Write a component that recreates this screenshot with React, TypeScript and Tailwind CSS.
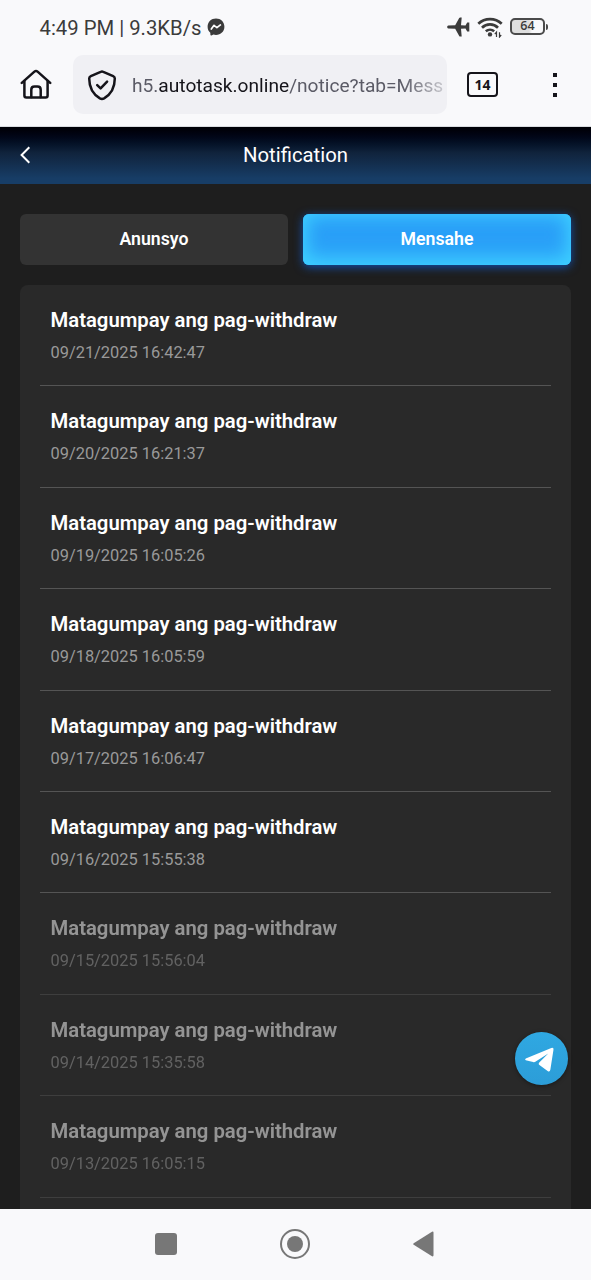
import { clsx } from "clsx"

interface Message {
  title: string
  date: string
  read?: boolean
}

const messages: Message[] = [
  { title: "Matagumpay ang pag-withdraw", date: "09/21/2025 16:42:47" },
  { title: "Matagumpay ang pag-withdraw", date: "09/20/2025 16:21:37" },
  { title: "Matagumpay ang pag-withdraw", date: "09/19/2025 16:05:26" },
  { title: "Matagumpay ang pag-withdraw", date: "09/18/2025 16:05:59" },
  { title: "Matagumpay ang pag-withdraw", date: "09/17/2025 16:06:47" },
  { title: "Matagumpay ang pag-withdraw", date: "09/16/2025 15:55:38" },
  { title: "Matagumpay ang pag-withdraw", date: "09/15/2025 15:56:04", read: true },
  { title: "Matagumpay ang pag-withdraw", date: "09/14/2025 15:35:58", read: true },
  { title: "Matagumpay ang pag-withdraw", date: "09/13/2025 16:05:15", read: true },
]

function StatusBar() {
  return (
    <div className="flex h-[55px] shrink-0 items-center pb-px pl-[39.500px] pr-[43px] text-[#3b3b3b]">
      <span className="mt-px whitespace-pre text-[20.300px] leading-6">4:49 PM | 9.3KB/s</span>
      {/* messenger */}
      <svg className="ml-[5px] h-[18px] w-[18px]" viewBox="0 0 18 18">
        <path
          d="M9 .5C4.200.5.600 4 .600 8.700c0 2.500 1 4.600 2.700 6.100l.1 1.900c0 .6.600 1 1.100.7l1.900-.8c.8.200 1.700.3 2.600.3 4.800 0 8.400-3.500 8.400-8.200S13.800.5 9 .5z"
          fill="currentColor"
        />
        <path
          d="M4.300 11 7 7.300l2.900 2.300 3.500-2.700"
          fill="none"
          stroke="#fff"
          strokeWidth="1.700"
          strokeLinecap="round"
          strokeLinejoin="round"
        />
      </svg>
      <div className="ml-auto flex items-center">
        {/* airplane */}
        <svg className="mb-px h-[20px] w-[23px]" viewBox="0 0 23 20" fill="currentColor">
          <path d="M1.300 8.500 8.200 8.300 12.200.900Q12.500.400 13.100.400h1.600L14 8.300l4.500.1 1.700-2.900h2.100v9h-2.100l-1.700-2.900-4.500.1.7 7.900h-1.600q-.6 0-.9-.5L8.200 11.700l-6.900-.2C.6 11.400.200 10.700.200 10s.4-1.400 1.100-1.500z" />
        </svg>
        <svg className="ml-[7px] h-[21px] w-[26px]" viewBox="0 0 26 21" fill="none" stroke="currentColor">
          <path d="M1.300 6.700a17 17 0 0 1 23.400 0" strokeWidth="2.700" />
          <path d="M5 10.700a11.500 11.500 0 0 1 16 0" strokeWidth="2.700" />
          <path d="M8.800 14.300a6.300 6.300 0 0 1 8.400 0" strokeWidth="2.500" />
          <circle cx="13" cy="17.400" r="2.200" fill="currentColor" stroke="none" />
          <path d="M19.500 20v-4.800l-1.700 2M22.500 15.200V20l1.700-2" strokeWidth="1.200" />
        </svg>
        <div className="mb-px ml-[7px] flex h-[17px] w-[35px] items-center justify-center rounded-[5px] border-2 border-[#4b4b4b] bg-linear-to-r from-[#dedede] from-55% to-[#f9f9fb] to-65% font-['Open_Sans'] text-[12.500px] font-semibold leading-none">
          64
        </div>
        <div className="mb-px ml-px h-[6px] w-[2px] rounded-r-sm bg-[#4b4b4b]" />
      </div>
    </div>
  )
}

function BrowserBar() {
  return (
    <div className="flex h-[72px] shrink-0 items-start border-b border-[#d9dce0] text-[#15141a]">
      <svg
        className="ml-5 mt-[14px] h-8 w-8"
        viewBox="0 0 32 32"
        fill="none"
        stroke="currentColor"
        strokeWidth="2.500"
        strokeLinecap="round"
        strokeLinejoin="round"
      >
        <path d="M1.800 13.900 14.400 2.600q1.600-1.300 3.200 0L30.200 13.900" />
        <path d="M4.400 12v14.400q0 2 2 2h19.200q2 0 2-2V12" />
        <path d="M11.300 28v-7.200q0-3.200 3.200-3.200h3q3.200 0 3.200 3.200V28" />
      </svg>
      <div className="ml-[21px] flex h-[59px] w-[374px] items-center overflow-hidden rounded-[10px] bg-[#f0f0f4]">
        <svg
          className="ml-[13px] h-8 w-8 shrink-0"
          viewBox="0 0 32 32"
          fill="none"
          stroke="currentColor"
          strokeWidth="2.500"
          strokeLinecap="round"
          strokeLinejoin="round"
        >
          <path d="M14.700 2.900q1.300-.6 2.600 0l9.900 4.200q1.600.7 1.600 2.400c0 9.500-3.800 15.700-10.700 19.900q-2.100 1.100-4.200 0C7 25.200 3.200 19 3.200 9.500q0-1.700 1.600-2.400z" />
          <path d="m11.200 16.200 3.400 3.200 6.500-6.800" />
        </svg>
        <div className="ml-[14px] mt-[3px] w-[314px] whitespace-nowrap mask-r-from-86% mask-r-to-104% text-[19.150px] text-[#5b5b66]">
          h5.<span className="text-[#15141a]">autotask.online</span>/notice?tab=Mess
        </div>
      </div>
      <div className="ml-[20px] mt-[17px] flex h-[25px] w-[31px] items-center justify-center rounded-[4px] border-[2.500px] border-current font-['Noto_Sans'] text-[14px] font-bold leading-none">
        14
      </div>
      <div className="ml-[55px] mt-[18px] flex flex-col gap-[6px]">
        <span className="h-1 w-1 bg-current" />
        <span className="h-1 w-1 bg-current" />
        <span className="h-1 w-1 bg-current" />
      </div>
    </div>
  )
}

function Header() {
  return (
    <header className="grid h-[57px] shrink-0 grid-cols-3 items-center bg-linear-to-b from-[#000005] via-[#10233c] via-45% to-[#173d66] to-90% text-white">
      <svg
        className="mb-px ml-[19px] h-[18px] w-3"
        viewBox="0 0 12 18"
        fill="none"
        stroke="currentColor"
        strokeWidth="2"
      >
        <path d="M10.300 1.300 2.600 9l7.700 7.700" />
      </svg>
      <h1 className="text-center text-[20.300px]">Notification</h1>
    </header>
  )
}

function MessageRow({ title, date, read }: Message) {
  return (
    <li
      className={clsx(
        "flex h-[101.400px] shrink-0 flex-col border-b border-[#545454] pl-[10.500px]",
        read && "opacity-50",
      )}
    >
      <h2 className="mt-[22px] text-[20.300px] font-semibold leading-[26px] text-white">{title}</h2>
      <p className="mt-[9px] text-[16.400px] leading-[22px] text-[#999999]">{date}</p>
    </li>
  )
}

function NavBar() {
  return (
    <nav className="flex h-[71px] shrink-0 items-center bg-[#f9f9fb] pb-px pl-[155px] text-[#777777]">
      <div className="h-[22px] w-[22px] rounded-[3px] bg-current" />
      <div className="ml-[103px] flex h-[30px] w-[30px] items-center justify-center rounded-full border-2 border-current">
        <div className="h-4 w-4 rounded-full bg-current" />
      </div>
      <svg className="ml-[103px] h-[26px] w-[21px]" viewBox="0 0 21 26" fill="currentColor">
        <path d="M.700 12.200 19 .700q1.500-.6 1.500 1v22.600q0 1.600-1.500 1L.700 13.800q-1-.8 0-1.600z" />
      </svg>
    </nav>
  )
}

export default function App() {
  return (
    <div className="relative flex h-screen flex-col overflow-hidden bg-[#f9f9fb] font-['Roboto',sans-serif]">
      <StatusBar />
      <BrowserBar />
      <main className="flex min-h-0 flex-1 flex-col overflow-hidden bg-[#1e1e1e]">
        <Header />
        <div className="mx-5 mt-[30px] grid shrink-0 grid-cols-2 gap-[15px] text-[17.700px] font-semibold text-white">
          <button className="h-[51px] rounded-[6px] bg-[#333333]">Anunsyo</button>
          <button className="h-[51px] rounded-[6px] bg-[#2a9ff8] shadow-[0_2px_10px_#1250b0,inset_0_-5px_22px_#3dd0ff,inset_0_0_18px_#3cc4ff]">
            Mensahe
          </button>
        </div>
        <ul className="mx-5 mt-5 flex min-h-0 flex-1 flex-col overflow-hidden rounded-t-[8px] bg-[#292929] px-5">
          {messages.map((message) => (
            <MessageRow key={message.date} {...message} />
          ))}
        </ul>
      </main>
      <NavBar />
      {/* floating support button */}
      <button className="absolute left-[515px] top-[1032px] h-[53px] w-[53px] rounded-full bg-linear-to-b from-[#2fa8e2] to-[#2c9dd8] shadow-[0_1px_4px_#00000066]">
        <svg className="h-full w-full" viewBox="0 0 54 54" fill="#fff">
          <path d="M11 26.900 37 16.200q2.700-.8 2.200 2L36 38.500q-.5 2.800-2.800 1.200l-8.300-6q-1.700-1.200-.2-2.700l9.200-9.200-13.200 8.600q-1 .7-2.300.2L11 28.700q-1.500-.9 0-1.800z" />
        </svg>
      </button>
    </div>
  )
}
